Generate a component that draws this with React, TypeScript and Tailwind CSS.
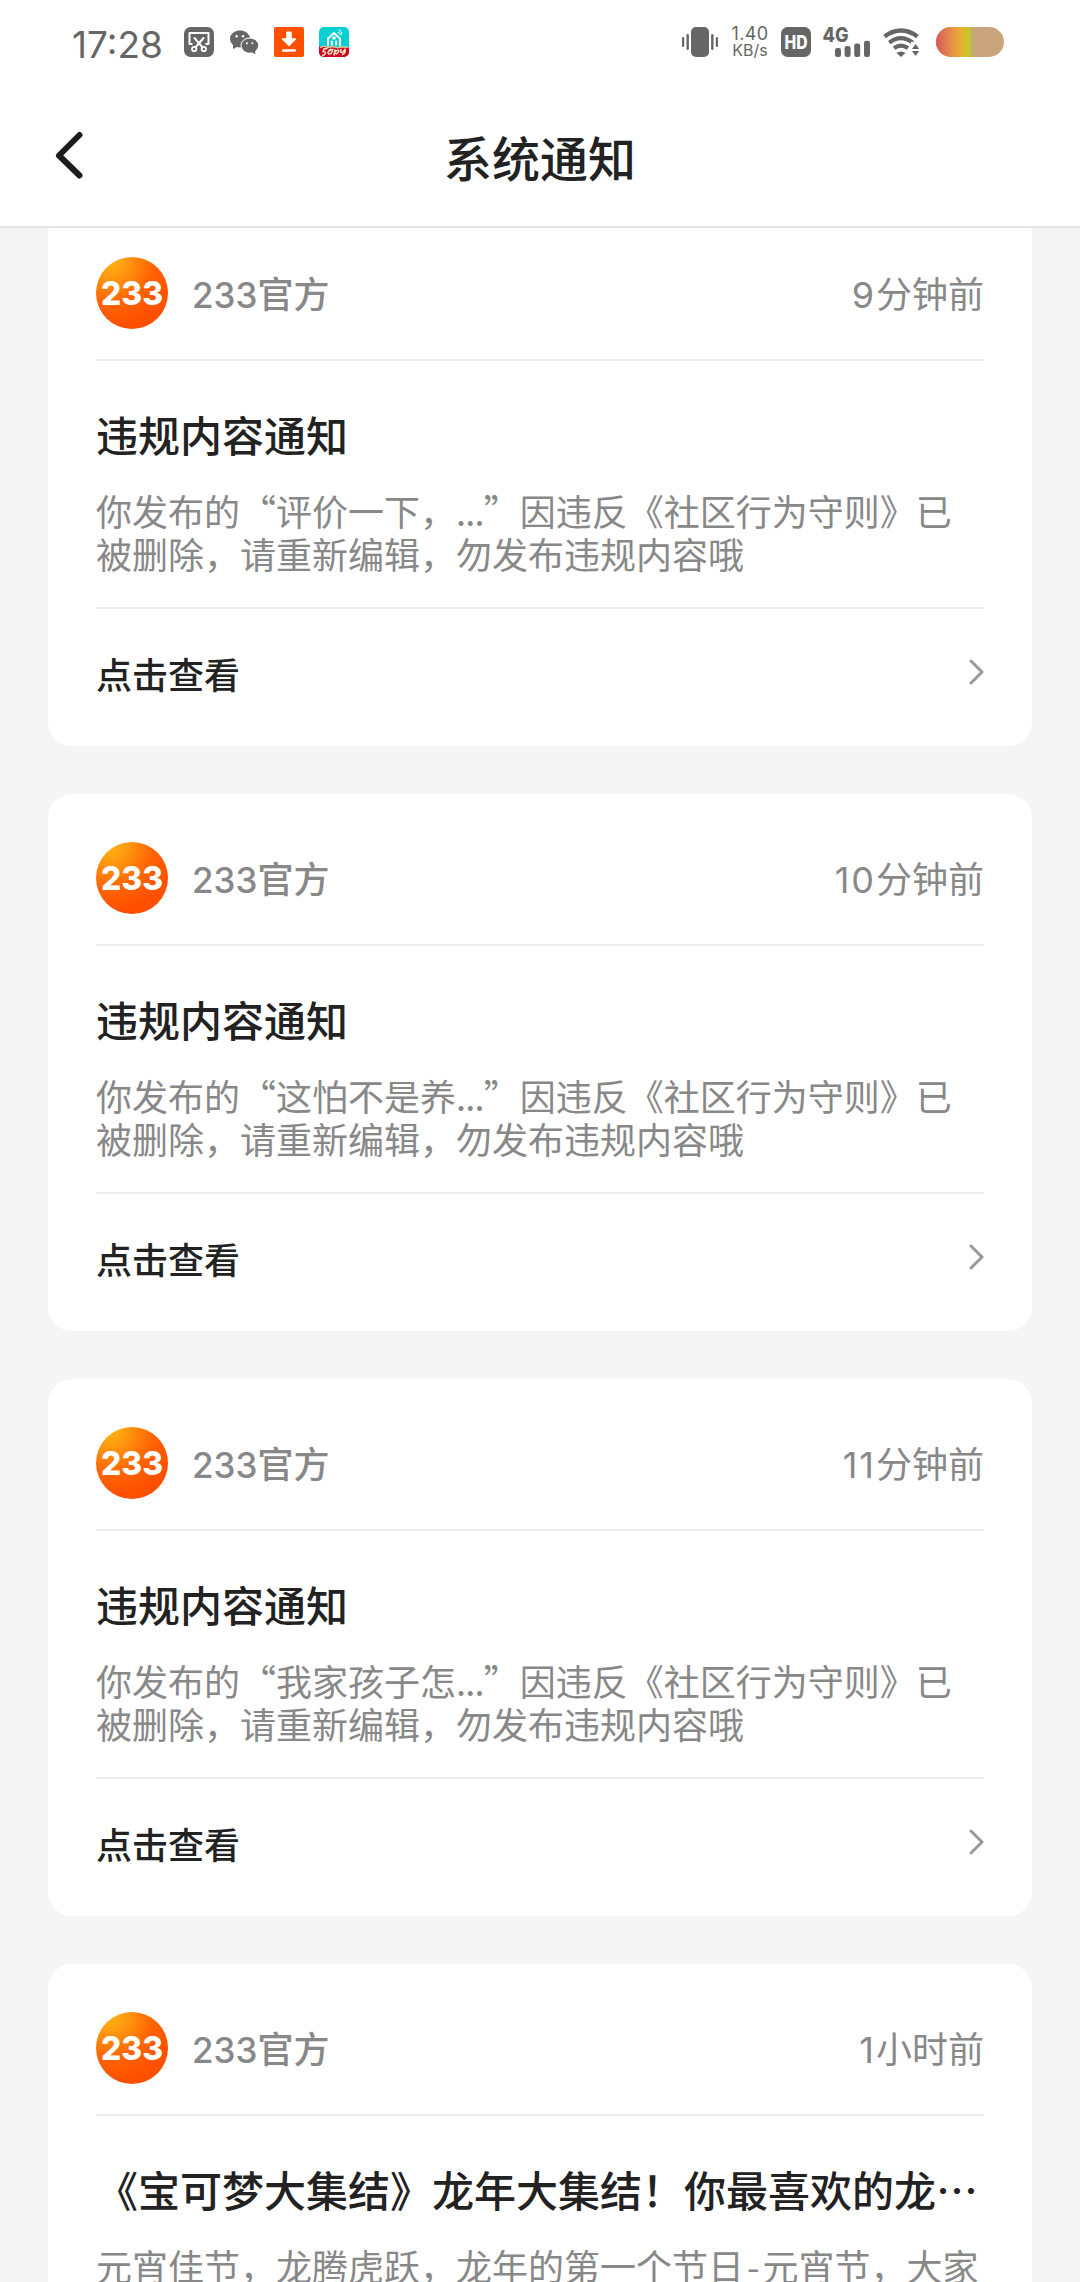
import type { ReactNode } from "react"

interface Notice {
  id: number
  time: { value: string; unit: string }
  title: string
  body: ReactNode
}

function ViolationText({ quote }: { quote: string }) {
  return (
    <>
      你发布的“{quote}<span className="tracking-[-0.8px]">...</span>”因违反《社区行为守则》已被删除，请重新编辑，勿发布违规内容哦
    </>
  )
}

const notices: Notice[] = [
  {
    id: 1,
    time: { value: "9", unit: "分钟前" },
    title: "违规内容通知",
    body: <ViolationText quote="评价一下，" />,
  },
  {
    id: 2,
    time: { value: "10", unit: "分钟前" },
    title: "违规内容通知",
    body: <ViolationText quote="这怕不是养" />,
  },
  {
    id: 3,
    time: { value: "11", unit: "分钟前" },
    title: "违规内容通知",
    body: <ViolationText quote="我家孩子怎" />,
  },
  {
    id: 4,
    time: { value: "1", unit: "小时前" },
    title: "《宝可梦大集结》龙年大集结！你最喜欢的龙…",
    body: (
      <>
        元宵佳节，龙腾虎跃，龙年的第一个节日<span className="px-[3px]">-</span>元宵节，大家
      </>
    ),
  },
]

function ScreenshotIcon() {
  return (
    <svg width="30" height="30" viewBox="0 0 30 30" fill="none">
      <rect width="30" height="30" rx="6.5" fill="#666" />
      <path d="M8.5 17H5.5V6h19v11h-3" stroke="#fff" strokeWidth="2" strokeLinejoin="round" />
      <path d="M10.5 11l8.200 9.500M19.500 11l-8.200 9.500" stroke="#fff" strokeWidth="2" strokeLinecap="round" />
      <circle cx="10.200" cy="22" r="2.200" stroke="#fff" strokeWidth="1.800" />
      <circle cx="19.800" cy="22" r="2.200" stroke="#fff" strokeWidth="1.800" />
    </svg>
  )
}

function WechatIcon() {
  return (
    <svg width="29" height="25" viewBox="0 0 29 25">
      <path d="M3 14.5L3 19l5-2.5z" fill="#666" />
      <ellipse cx="10" cy="8.8" rx="10" ry="8.6" fill="#666" />
      <ellipse cx="19.8" cy="15.6" rx="9.3" ry="8" fill="#fff" />
      <ellipse cx="19.8" cy="15.6" rx="8.4" ry="7.2" fill="#666" />
      <path d="M21.5 22l4 2.3-.6-4z" fill="#666" />
      <circle cx="6.6" cy="6.2" r="1.2" fill="#fff" />
      <circle cx="13" cy="6.2" r="1.2" fill="#fff" />
      <circle cx="17" cy="13.3" r="1" fill="#fff" />
      <circle cx="22.4" cy="13.3" r="1" fill="#fff" />
    </svg>
  )
}

function DownloadIcon() {
  return (
    <svg width="30" height="30" viewBox="0 0 30 30">
      <rect width="30" height="30" rx="2" fill="#ff5000" />
      <rect x="12.2" y="4.5" width="5.6" height="9" rx="1.2" fill="#fff" />
      <path d="M8.6 12h12.8L15 18.6z" fill="#fff" stroke="#fff" strokeWidth="1.4" strokeLinejoin="round" />
      <rect x="8" y="22.2" width="14" height="2.6" rx="1.2" fill="#fff" />
    </svg>
  )
}

function HouseIcon() {
  return (
    <svg width="30" height="30" viewBox="0 0 30 30" fill="none">
      <rect width="30" height="30" rx="5" fill="#08d0d2" />
      <path d="M0 19.5l30 1V25a5 5 0 0 1-5 5H5a5 5 0 0 1-5-5z" fill="#d0021f" />
      <path d="M9 18.5v-7l6-5.500 6 5.500v7" stroke="#fff" strokeWidth="2" strokeLinecap="round" strokeLinejoin="round" />
      <circle cx="15" cy="11" r="1.800" fill="#fff" />
      <path d="M12.800 13.800v4.500M17.200 13.800v4.500" stroke="#fff" strokeWidth="2" />
      <path d="M19 5.5c1.5-.3 2.5.7 2.300 2.200M20 3.300c2 .3 3 1.800 2.600 4" stroke="#fff" strokeWidth="1" strokeLinecap="round" />
      <path d="M1 20.5l4-1.3 4 1.3 5-1 5 1.2 5-1 5 .6" stroke="#d9c49a" strokeWidth="1.4" />
      <path
        d="M8 21.500l-3 .5-.8 2.500c3-.5 3 3-.5 4M10 23.500c2-2.500 4-.5 3 1.500s-3.500 3-4 1 3-3 5-3.500M16 23l-1 5M16.500 24.500c2-2 4-1.500 3 .5s-2 2-3 1.500M22 22.500c-1 3 0 3.500 2 2.500l2-2.500c1 2-1 4.500-2.500 5"
        stroke="#fbe6c4"
        strokeWidth="1.5"
        strokeLinecap="round"
      />
    </svg>
  )
}

function VibrateIcon() {
  return (
    <svg width="36" height="30" viewBox="0 0 36 30" fill="#666">
      <rect x="9" width="18" height="30" rx="5" />
      <rect x="0" y="10" width="2.2" height="10" rx="1.1" />
      <rect x="4.5" y="7" width="2.4" height="16" rx="1.2" />
      <rect x="29.1" y="7" width="2.4" height="16" rx="1.2" />
      <rect x="33.8" y="10" width="2.2" height="10" rx="1.1" />
    </svg>
  )
}

function HdIcon() {
  return (
    <svg width="30" height="30" viewBox="0 0 30 30">
      <rect width="30" height="30" rx="6.5" fill="#666" />
      <text
        x="3.5"
        y="21.7"
        textLength="23"
        lengthAdjust="spacingAndGlyphs"
        fill="#fff"
        className="font-['Inter',sans-serif] text-[18.5px] font-extrabold"
      >
        HD
      </text>
    </svg>
  )
}

function SignalIcon() {
  return (
    <svg width="48" height="30" viewBox="0 0 48 30" fill="#666" className="overflow-visible">
      <text
        x="-0.5"
        y="14.8"
        textLength="26"
        lengthAdjust="spacingAndGlyphs"
        className="font-['Inter',sans-serif] text-[20px] font-extrabold"
      >
        4G
      </text>
      <rect x="12" y="21" width="6" height="9" rx="2.2" />
      <rect x="21.6" y="19" width="6" height="11" rx="2.2" />
      <rect x="31.2" y="16.5" width="6" height="13.5" rx="2.2" />
      <rect x="41" y="13.7" width="6" height="16.3" rx="2.2" />
    </svg>
  )
}

function WifiIcon() {
  return (
    <svg width="37" height="30" viewBox="0 0 37 30" fill="none">
      <path d="M1.5 9.5Q18 -2.5 34.5 9.5" stroke="#666" strokeWidth="4.2" />
      <path d="M6.3 15.6Q18 6.6 29.7 15.6" stroke="#666" strokeWidth="4.2" />
      <path d="M11 21.2Q18 16 25 21.2" stroke="#666" strokeWidth="4" />
      <path d="M13.5 26Q18 23 22.5 26L18 30z" fill="#666" />
      <path d="M28 15h9v15h-9z" fill="#fff" />
      <path d="M29 22l3.600-5 3.600 5zM29 24h7.200l-3.600 5z" fill="#666" />
    </svg>
  )
}

function StatusBar() {
  return (
    <div className="flex h-[84px] items-center pl-[72px] pr-[76px] text-[#666]">
      <span className="mt-[5px] w-[112px] shrink-0 font-['Inter',sans-serif] text-[37px] leading-none">17:28</span>
      <ScreenshotIcon />
      <div className="ml-4">
        <WechatIcon />
      </div>
      <div className="ml-[15px]">
        <DownloadIcon />
      </div>
      <div className="ml-[15px]">
        <HouseIcon />
      </div>

      <div className="ml-auto flex items-center">
        <VibrateIcon />
        <div className="ml-[11px] flex w-[42px] flex-col items-center font-['Inter',sans-serif] leading-none">
          <span className="text-[18px] leading-[17px] tracking-[0.4px]">1.40</span>
          <span className="text-[16px] leading-[17px]">KB/s</span>
        </div>
        <div className="ml-[10px]">
          <HdIcon />
        </div>
        <div className="ml-3">
          <SignalIcon />
        </div>
        <div className="ml-3">
          <WifiIcon />
        </div>
        <div className="ml-4 flex h-[30px] w-[68px] overflow-hidden rounded-full bg-[#c9a57e]">
          <div className="w-[35px] bg-linear-to-r from-[#d9575a] via-[#e9ae30] via-70% to-[#bccb28]"></div>
        </div>
      </div>
    </div>
  )
}

function Avatar() {
  return (
    <svg width="72" height="72" viewBox="0 0 72 72" className="shrink-0">
      <defs>
        <radialGradient id="avatar" cx="0.2" cy="0.05" r="0.9">
          <stop offset="0" stopColor="#ffb314" />
          <stop offset="0.25" stopColor="#ff9a10" />
          <stop offset="0.65" stopColor="#ff6503" />
          <stop offset="1" stopColor="#ff5000" />
        </radialGradient>
      </defs>
      <circle cx="36" cy="36" r="36" fill="url(#avatar)" />
      <text
        x="5"
        y="48"
        textLength="62"
        lengthAdjust="spacingAndGlyphs"
        fill="#fff"
        className="font-['Inter',sans-serif] text-[33px] font-extrabold"
      >
        233
      </text>
    </svg>
  )
}

function NoticeCard({ notice }: { notice: Notice }) {
  return (
    <article className="h-[537px] shrink-0 rounded-3xl bg-white px-12 pt-12">
      <div className="flex h-[104px] items-start border-b-2 border-[#ececec]">
        <Avatar />
        <div className="ml-6 flex h-[72px] flex-1 items-baseline justify-between text-[36px] leading-[70px] text-[#888]">
          <span className="font-medium">
            <span className="font-['Inter',sans-serif] text-[35px]">233</span>官方
          </span>
          <span>
            <span className="font-['Inter',sans-serif] tracking-[2px]">{notice.time.value}</span>
            {notice.time.unit}
          </span>
        </div>
      </div>

      <h2 className="mt-[43px] whitespace-nowrap text-[42px] font-medium leading-[60px] text-[#222]">{notice.title}</h2>
      <p className="mt-[25px] h-[118px] text-[36px] leading-[42.5px] text-[#888]">{notice.body}</p>

      <div className="flex items-center justify-between border-t-2 border-[#ececec] pt-[37px]">
        <span className="text-[36px] font-medium leading-[54px] text-[#222]">点击查看</span>
        <svg width="16" height="28" viewBox="0 0 16 28" fill="none" className="mb-0.5">
          <path d="M3 3l11 11L3 25" stroke="#999" strokeWidth="3" strokeLinecap="round" strokeLinejoin="round" />
        </svg>
      </div>
    </article>
  )
}

export default function App() {
  return (
    <main
      lang="zh-CN"
      className="flex h-[2282px] w-[1080px] flex-col overflow-hidden bg-[#f5f5f5] font-['Noto_Sans_CJK_SC',sans-serif]"
    >
      <header className="relative z-10 h-[228px] shrink-0 border-b-2 border-[#e4e4e4] bg-white">
        <StatusBar />
        <div className="grid h-[142px] grid-cols-[1fr_auto_1fr] items-center px-[54px]">
          <svg width="30" height="50" viewBox="0 0 30 50" fill="none">
            <path d="M25.5 5L5 25.5 25.5 45.5" stroke="#1c1c1c" strokeWidth="6" strokeLinecap="round" strokeLinejoin="round" />
          </svg>
          <h1 className="pt-0.5 text-[48px] font-medium leading-none text-[#222]">系统通知</h1>
        </div>
      </header>

      {/* list is scrolled slightly, the first card starts under the header */}
      <section className="-mt-[19px] flex flex-col gap-12 px-12">
        {notices.map((notice) => (
          <NoticeCard key={notice.id} notice={notice} />
        ))}
      </section>
    </main>
  )
}
